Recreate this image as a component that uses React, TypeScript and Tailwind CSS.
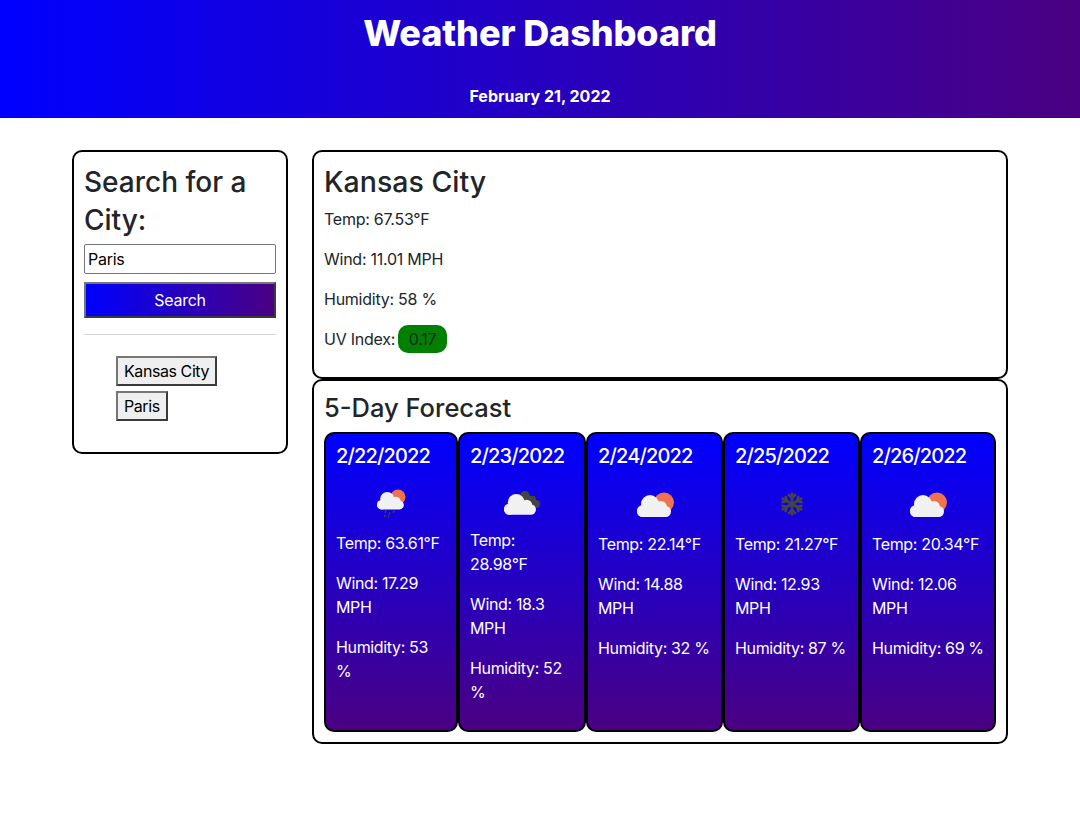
const stats = ["Temp: 67.53°F", "Wind: 11.01 MPH", "Humidity: 58 %"];

const forecast = [
  { date: "2/22/2022", icon: "rain", iconBox: "h-[62px]", temp: "Temp: 63.61°F", wind: "Wind: 17.29 MPH", humidity: "Humidity: 53 %" },
  { date: "2/23/2022", icon: "dark", iconBox: "h-[59px]", temp: "Temp: 28.98°F", wind: "Wind: 18.3 MPH", humidity: "Humidity: 52 %" },
  { date: "2/24/2022", icon: "sun", iconBox: "h-[63px]", temp: "Temp: 22.14°F", wind: "Wind: 14.88 MPH", humidity: "Humidity: 32 %" },
  { date: "2/25/2022", icon: "snow", iconBox: "h-[63px]", temp: "Temp: 21.27°F", wind: "Wind: 12.93 MPH", humidity: "Humidity: 87 %" },
  { date: "2/26/2022", icon: "sun", iconBox: "h-[63px]", temp: "Temp: 20.34°F", wind: "Wind: 12.06 MPH", humidity: "Humidity: 69 %" },
];

function Cloud({ x, y, scale }: { x: number; y: number; scale: number }) {
  return (
    <g transform={`translate(${x} ${y}) scale(${scale})`} fill="#f1f1f1">
      <rect x="0" y="11" width="34" height="11" rx="5.5" />
      <circle cx="13" cy="9" r="9" />
      <circle cx="24" cy="12" r="6" />
      <circle cx="6" cy="16" r="6" />
    </g>
  );
}

function WeatherIcon({ type }: { type: string }) {
  if (type === "snow") {
    return (
      <svg viewBox="0 0 50 50" className="size-[50px]" fill="none" stroke="#444444" strokeWidth="2.6" strokeLinecap="round">
        {[0, 60, 120].map((angle) => (
          <g key={angle} transform={`rotate(${angle} 25 24)`}>
            <path d="M25 13.5V34.5" />
            <path d="M22 15L25 18L28 15M22 33L25 30L28 33" />
          </g>
        ))}
      </svg>
    );
  }
  return (
    <svg viewBox="0 0 50 50" className="size-[50px]">
      {type === "sun" && (
        <>
          <circle cx="34" cy="22.5" r="10" fill="#f0734f" />
          <Cloud x={7} y={15} scale={1} />
        </>
      )}
      {type === "rain" && (
        <>
          <circle cx="32" cy="17" r="7.5" fill="#f0734f" />
          <Cloud x={11} y={12} scale={0.79} />
          <path d="M20 30l-.8 3M28 30.5l-.8 2.5M24 32l-.8 2.5M19 35l-.6 2M23 35.5l-.6 2" stroke="#444444" strokeWidth="1.3" fill="none" />
        </>
      )}
      {type === "dark" && (
        <>
          <g fill="#444444">
            <circle cx="28" cy="16" r="5" />
            <circle cx="35" cy="20" r="4" />
            <circle cx="39" cy="24" r="4" />
            <rect x="26" y="16" width="12" height="10" />
          </g>
          <Cloud x={7} y={14} scale={0.94} />
        </>
      )}
    </svg>
  );
}

export default function App() {
  return (
    <div className="min-h-[836px] bg-white font-['Inter',sans-serif] text-base leading-6 tracking-[-0.25px] text-[#212529]">
      <header className="h-[118px] bg-linear-to-r/srgb from-[#0000ff] to-[#4b0082] pt-[12px] text-center font-bold text-white">
        <h1 className="text-[36px] leading-[43px] font-extrabold tracking-[-0.1px]">Weather Dashboard</h1>
        <p className="mt-[29px] tracking-normal">February 21, 2022</p>
      </header>

      <main className="mx-auto mt-8 flex w-[936px] items-start gap-6">
        <aside className="w-[216px] rounded-[10px] border-2 border-black p-[10px]">
          <h2 className="mb-[4px] pt-px text-[28px] leading-[38.4px] font-medium tracking-normal">Search for a City:</h2>
          <input
            defaultValue="Paris"
            className="block h-[30px] w-full rounded-[2px] border border-[#767676] bg-white px-[3px] text-black outline-none"
          />
          <button
            type="button"
            className="mt-2 block h-9 w-full border-2 border-t-[#767676] border-r-[#3a3a3a] border-b-[#3a3a3a] border-l-[#767676] bg-linear-to-r/srgb from-[#0000ff] to-[#4b0082] text-white"
          >
            Search
          </button>
          <hr className="mt-4 border-t border-[#d3d3d3]" />
          <ul className="mt-[21px] mb-[21px] flex flex-col items-start gap-[5px] pl-8 tracking-[-0.42px]">
            {["Kansas City", "Paris"].map((city) => (
              <li key={city}>
                <button
                  type="button"
                  className="block h-[30px] border-2 border-t-[#767676] border-r-[#3a3a3a] border-b-[#3a3a3a] border-l-[#767676] bg-[#efefef] px-[6px] text-black"
                >
                  {city}
                </button>
              </li>
            ))}
          </ul>
        </aside>

        <section className="flex w-[696px] flex-col">
          <div className="h-[229px] rounded-[10px] border-2 border-black p-[10px]">
            <h2 className="mb-[6px] pt-px text-[28.5px] leading-[38.4px] font-medium tracking-normal">Kansas City</h2>
            {stats.map((stat) => (
              <p key={stat} className="mb-4">{stat}</p>
            ))}
            <p className="flex h-6 items-center">
              UV Index:
              <span className="ml-[3px] flex h-7 w-[49px] items-center justify-center rounded-[10px] bg-[#008000]">0.17</span>
            </p>
          </div>

          <div className="h-[365px] rounded-[10px] border-2 border-black p-[10px]">
            <h3 className="mb-[7px] text-[25.5px] leading-[34px] font-medium tracking-normal">5-Day Forecast</h3>
            <div className="grid grid-cols-[134px_128px_137px_137px_136px] tracking-[-0.35px]">
              {forecast.map((day) => (
                <article
                  key={day.date}
                  className="h-[300px] rounded-[10px] border-2 border-black bg-linear-to-b/srgb from-[#0000ff] to-[#4b0082] p-[10px] text-white"
                >
                  <h4 className="text-[20px] leading-[25px] font-medium tracking-[-0.85px]">{day.date}</h4>
                  <div className={`flex justify-center ${day.iconBox}`}>
                    <div className="mt-[11px]">
                      <WeatherIcon type={day.icon} />
                    </div>
                  </div>
                  <p className="mb-4">{day.temp}</p>
                  <p className="mb-4">{day.wind}</p>
                  <p>{day.humidity}</p>
                </article>
              ))}
            </div>
          </div>
        </section>
      </main>
    </div>
  );
}
